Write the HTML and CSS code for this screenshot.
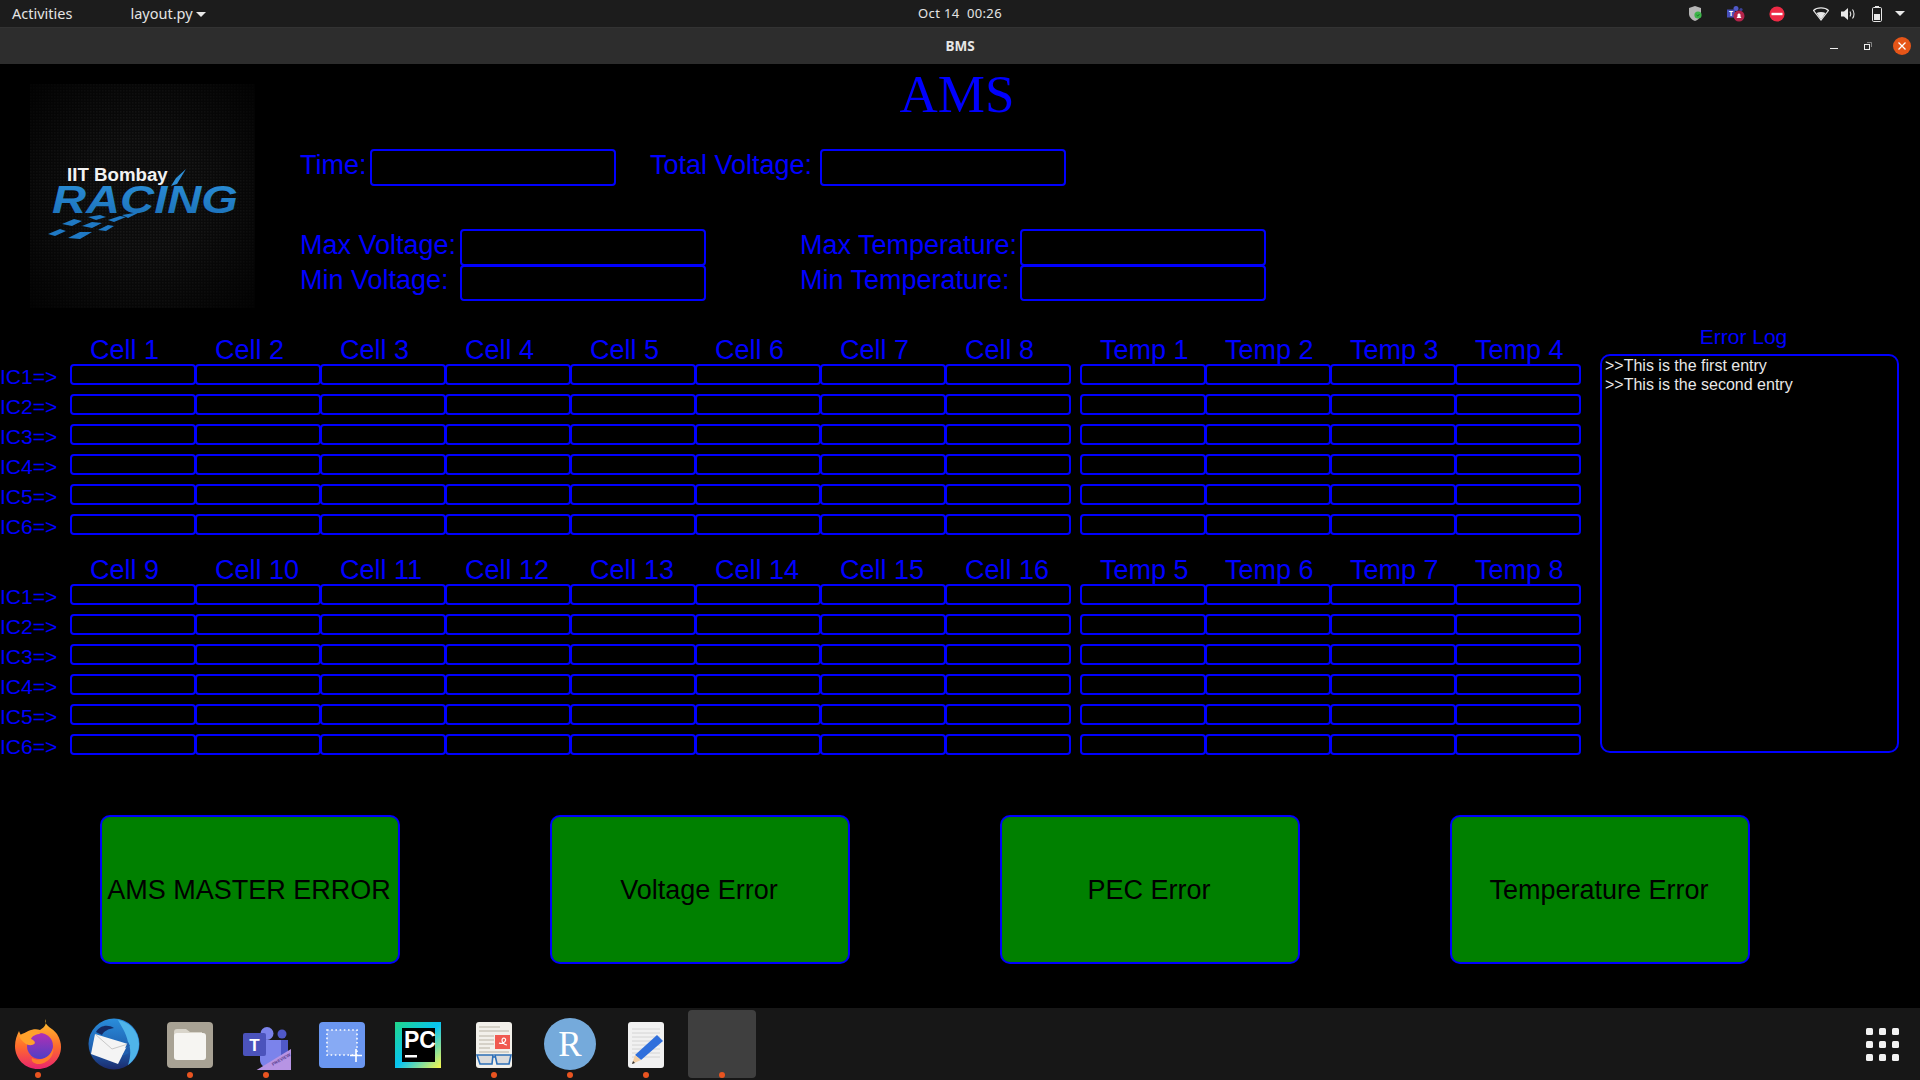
FILE: index.html
```html
<!DOCTYPE html>
<html lang="en">
<head>
  <meta charset="UTF-8" />
  <title>BMS</title>
  <link rel="stylesheet" href="styles.css">
</head>
<body>

  <!-- Desktop top bar -->
  <div class="topbar">
    <div class="topbar-left">
      <span class="activities">Activities</span>
      <span class="app-menu">layout.py <i class="caret"></i></span>
    </div>
    <div class="clock">Oct 14&nbsp; 00:26</div>
    <div class="tray">
      <svg class="tray-shield" viewBox="0 0 16 16"><path d="M7 0 L13 2 V8 C13 11 10 14 7 15 C4 14 1 11 1 8 V2 Z" fill="#b5b5b5"/><circle cx="10" cy="9" r="3.6" fill="#3db54a"/><path d="M8.6 9 L9.7 10 L11.4 8.2" stroke="#1c6b28" fill="none"/></svg>
      <svg class="tray-teams" viewBox="0 0 18 16"><circle cx="9" cy="2.5" r="2.5" fill="#5059c9"/><circle cx="14" cy="3.5" r="1.6" fill="#3c4296"/><rect x="0" y="3.5" width="8" height="8" fill="#464eb8"/><text x="2" y="10" class="tray-t">T</text><circle cx="12" cy="10" r="5.5" fill="#b3244a"/><path d="M9.5 12 H14.5 L13.5 10.5 V9 C13.5 7 10.5 7 10.5 9 V10.5 Z" fill="#fff"/></svg>
      <svg class="tray-stop" viewBox="0 0 16 16"><circle cx="8" cy="8" r="7.6" fill="#ed2a45"/><rect x="2.5" y="6.8" width="11" height="2.4" fill="#fff"/></svg>
      <svg class="tray-wifi" viewBox="0 0 16 14"><path d="M0.5 3.5 C4 0 12 0 15.5 3.5 L8 13 Z" fill="none" stroke="#e8e8e8" stroke-width="1.2"/><path d="M3.5 6 C6 4.5 10 4.5 12.5 6 L8 12.5 Z" fill="#e8e8e8"/></svg>
      <svg class="tray-vol" viewBox="0 0 15 14"><path d="M0 4.5 H3 L7 1 V13 L3 9.5 H0 Z" fill="#e8e8e8"/><path d="M9 4.5 C10 6 10 8 9 9.5 M11.5 2.5 C13.5 5 13.5 9 11.5 11.5" fill="none" stroke="#e8e8e8" stroke-width="1.1"/></svg>
      <svg class="tray-bat" viewBox="0 0 10 16"><rect x="0.5" y="1.5" width="9" height="14" rx="1.2" fill="none" stroke="#e8e8e8"/><rect x="3" y="0" width="4" height="1.5" fill="#e8e8e8"/><rect x="2" y="8" width="6" height="6" fill="#e8e8e8"/></svg>
      <i class="caret tray-caret"></i>
    </div>
  </div>

  <!-- Window title bar -->
  <div class="titlebar">
    <span class="title">BMS</span>
    <div class="win-buttons">
      <span class="win-min"></span>
      <svg class="win-restore" viewBox="0 0 8 8"><rect x="0.5" y="2.5" width="5" height="5" fill="none" stroke="#eee"/><path d="M3 0.5 H7.5 V5" fill="none" stroke="#999" stroke-width="0.8"/></svg>
      <svg class="win-close" viewBox="0 0 18 18"><circle cx="9" cy="9" r="9" fill="#e65518"/><path d="M5.5 5.5 L12.5 12.5 M12.5 5.5 L5.5 12.5" stroke="#fff" stroke-width="1.3"/></svg>
    </div>
  </div>

  <div class="app">

    <div class="head">
      <!-- Team logo -->
      <svg class="logo" viewBox="0 0 225 224">
        <defs>
          <pattern id="carbon" width="3" height="3" patternUnits="userSpaceOnUse">
            <rect width="3" height="3" fill="#0b0b0b"/>
            <rect width="1.5" height="1.5" fill="#181818"/>
          </pattern>
          <radialGradient id="fade" r="0.72">
            <stop offset="0.35" stop-color="#000" stop-opacity="0"/>
            <stop offset="1" stop-color="#000" stop-opacity="0.85"/>
          </radialGradient>
          <linearGradient id="racing" x1="0" y1="0" x2="0" y2="1">
            <stop offset="0" stop-color="#2c90d8"/>
            <stop offset="1" stop-color="#1a6fb8"/>
          </linearGradient>
        </defs>
        <rect width="225" height="224" fill="url(#carbon)"/>
        <rect width="225" height="224" fill="url(#fade)"/>
        <text x="37" y="97" class="logo-top">IIT Bombay</text>
        <text x="22" y="129" textLength="186" lengthAdjust="spacingAndGlyphs" class="logo-racing">RACING</text>
        <path d="M156 85 L146 94 L141 102 L147 100 Z" fill="#2f8fd6"/>
        <g fill="#1f79c4">
          <path d="M18 150 L30 145 L36 147 L25 152 Z"/>
          <path d="M38 154 L50 148 L62 148 L50 155 Z"/>
          <path d="M32 140 L44 135 L52 137 L42 142 Z"/>
          <path d="M52 142 L62 138 L72 139 L62 144 Z"/>
          <path d="M68 146 L78 141 L84 142 L76 147 Z"/>
          <path d="M58 133 L70 131 L76 133 L66 136 Z"/>
          <path d="M78 136 L90 132 L96 133 L84 138 Z"/>
          <path d="M92 131 L110 128 L98 134 Z"/>
        </g>
      </svg>

      <div class="form">
        <h1 class="heading">AMS</h1>
        <div class="form-row row-time">
          <label class="lbl lbl-time">Time:</label><div class="field"></div>
          <label class="lbl lbl-total">Total Voltage:</label><div class="field"></div>
        </div>
        <div class="form-row row-max">
          <label class="lbl lbl-volt">Max Voltage:</label><div class="field"></div>
          <label class="lbl lbl-temp">Max Temperature:</label><div class="field"></div>
        </div>
        <div class="form-row row-min">
          <label class="lbl lbl-volt">Min Voltage:</label><div class="field"></div>
          <label class="lbl lbl-temp">Min Temperature:</label><div class="field"></div>
        </div>
      </div>
    </div>

    <div class="body">
      <div class="tables">

        <div class="table">
          <div class="row head-row"><span></span><span>Cell 1</span><span>Cell 2</span><span>Cell 3</span><span>Cell 4</span><span>Cell 5</span><span>Cell 6</span><span>Cell 7</span><span>Cell 8</span><span class="t1">Temp 1</span><span>Temp 2</span><span>Temp 3</span><span>Temp 4</span></div>
          <div class="row"><span class="ic">IC1=&gt;</span><div class="cell"></div><div class="cell"></div><div class="cell"></div><div class="cell"></div><div class="cell"></div><div class="cell"></div><div class="cell"></div><div class="cell"></div><div class="cell t1"></div><div class="cell"></div><div class="cell"></div><div class="cell"></div></div>
          <div class="row"><span class="ic">IC2=&gt;</span><div class="cell"></div><div class="cell"></div><div class="cell"></div><div class="cell"></div><div class="cell"></div><div class="cell"></div><div class="cell"></div><div class="cell"></div><div class="cell t1"></div><div class="cell"></div><div class="cell"></div><div class="cell"></div></div>
          <div class="row"><span class="ic">IC3=&gt;</span><div class="cell"></div><div class="cell"></div><div class="cell"></div><div class="cell"></div><div class="cell"></div><div class="cell"></div><div class="cell"></div><div class="cell"></div><div class="cell t1"></div><div class="cell"></div><div class="cell"></div><div class="cell"></div></div>
          <div class="row"><span class="ic">IC4=&gt;</span><div class="cell"></div><div class="cell"></div><div class="cell"></div><div class="cell"></div><div class="cell"></div><div class="cell"></div><div class="cell"></div><div class="cell"></div><div class="cell t1"></div><div class="cell"></div><div class="cell"></div><div class="cell"></div></div>
          <div class="row"><span class="ic">IC5=&gt;</span><div class="cell"></div><div class="cell"></div><div class="cell"></div><div class="cell"></div><div class="cell"></div><div class="cell"></div><div class="cell"></div><div class="cell"></div><div class="cell t1"></div><div class="cell"></div><div class="cell"></div><div class="cell"></div></div>
          <div class="row"><span class="ic">IC6=&gt;</span><div class="cell"></div><div class="cell"></div><div class="cell"></div><div class="cell"></div><div class="cell"></div><div class="cell"></div><div class="cell"></div><div class="cell"></div><div class="cell t1"></div><div class="cell"></div><div class="cell"></div><div class="cell"></div></div>
        </div>

        <div class="table table-two">
          <div class="row head-row"><span></span><span>Cell 9</span><span>Cell 10</span><span>Cell 11</span><span>Cell 12</span><span>Cell 13</span><span>Cell 14</span><span>Cell 15</span><span>Cell 16</span><span class="t1">Temp 5</span><span>Temp 6</span><span>Temp 7</span><span>Temp 8</span></div>
          <div class="row"><span class="ic">IC1=&gt;</span><div class="cell"></div><div class="cell"></div><div class="cell"></div><div class="cell"></div><div class="cell"></div><div class="cell"></div><div class="cell"></div><div class="cell"></div><div class="cell t1"></div><div class="cell"></div><div class="cell"></div><div class="cell"></div></div>
          <div class="row"><span class="ic">IC2=&gt;</span><div class="cell"></div><div class="cell"></div><div class="cell"></div><div class="cell"></div><div class="cell"></div><div class="cell"></div><div class="cell"></div><div class="cell"></div><div class="cell t1"></div><div class="cell"></div><div class="cell"></div><div class="cell"></div></div>
          <div class="row"><span class="ic">IC3=&gt;</span><div class="cell"></div><div class="cell"></div><div class="cell"></div><div class="cell"></div><div class="cell"></div><div class="cell"></div><div class="cell"></div><div class="cell"></div><div class="cell t1"></div><div class="cell"></div><div class="cell"></div><div class="cell"></div></div>
          <div class="row"><span class="ic">IC4=&gt;</span><div class="cell"></div><div class="cell"></div><div class="cell"></div><div class="cell"></div><div class="cell"></div><div class="cell"></div><div class="cell"></div><div class="cell"></div><div class="cell t1"></div><div class="cell"></div><div class="cell"></div><div class="cell"></div></div>
          <div class="row"><span class="ic">IC5=&gt;</span><div class="cell"></div><div class="cell"></div><div class="cell"></div><div class="cell"></div><div class="cell"></div><div class="cell"></div><div class="cell"></div><div class="cell"></div><div class="cell t1"></div><div class="cell"></div><div class="cell"></div><div class="cell"></div></div>
          <div class="row"><span class="ic">IC6=&gt;</span><div class="cell"></div><div class="cell"></div><div class="cell"></div><div class="cell"></div><div class="cell"></div><div class="cell"></div><div class="cell"></div><div class="cell"></div><div class="cell t1"></div><div class="cell"></div><div class="cell"></div><div class="cell"></div></div>
        </div>

      </div>

      <div class="error-log">
        <div class="error-title">Error Log</div>
        <div class="error-box">
          <p>&gt;&gt;This is the first entry</p>
          <p>&gt;&gt;This is the second entry</p>
        </div>
      </div>
    </div>

    <div class="alerts">
      <div class="alert">AMS MASTER ERROR</div>
      <div class="alert">Voltage Error</div>
      <div class="alert">PEC Error</div>
      <div class="alert">Temperature Error</div>
    </div>

  </div>

  <!-- Dock -->
  <div class="dock">
    <div class="dock-item running">
      <svg class="dock-icon" viewBox="0 0 52 52">
        <defs>
          <linearGradient id="fx" x1="0" y1="0" x2="0" y2="1"><stop offset="0" stop-color="#ffc62e"/><stop offset="0.55" stop-color="#ff6b2c"/><stop offset="1" stop-color="#e9246f"/></linearGradient>
          <linearGradient id="fxp" x1="0" y1="0" x2="0" y2="1"><stop offset="0" stop-color="#b22fb5"/><stop offset="1" stop-color="#4f3fc4"/></linearGradient>
        </defs>
        <path d="M33 1 C32 8 41 10 45 16 C48 21 49 25 49 29 C49 42 38 51 26 51 C13 51 3 41 3 28 C3 22 5 17 7 13 C8 16 9 17 10 18 C14 13 22 10 28 12 C33 9 35 6 33 1 Z" fill="url(#fx)"/>
        <circle cx="28" cy="28" r="13" fill="url(#fxp)"/>
        <path d="M7 18 C13 13 23 12 29 16 C24 16 20 18 19 21 C24 23 24 26 20 27 C15 28 10 24 7 18 Z" fill="#ffa12b"/>
        <path d="M20 40 C28 44 38 40 41 30 C43 38 34 47 25 46 C21 45 19 43 20 40 Z" fill="#ff7a2c"/>
      </svg>
    </div>
    <div class="dock-item">
      <svg class="dock-icon" viewBox="0 0 52 52">
        <defs>
          <linearGradient id="tb" x1="0" y1="0" x2="0" y2="1"><stop offset="0" stop-color="#2a8edb"/><stop offset="0.6" stop-color="#1f5fb0"/><stop offset="1" stop-color="#1b2a6b"/></linearGradient>
        </defs>
        <circle cx="26" cy="26" r="25.5" fill="url(#tb)"/>
        <path d="M30 2 C42 4 51 14 51 26 C51 34 47 42 40 47 C43 38 43 30 40 24 C38 14 33 8 30 2 Z" fill="#4fb4ea"/>
        <path d="M8 14 C12 7 20 6 26 10 C20 11 16 13 14 17 Z" fill="#152a63"/>
        <path d="M7 16 L40 26 L30 46 L3 36 Z" fill="#f4f4f4"/>
        <path d="M7 16 L24 31 L40 26" fill="none" stroke="#bdbdbd" stroke-width="0.8"/>
        <path d="M40 24 L37 30 L42 28 Z M38 32 L34 38 L41 35 Z" fill="#1f5fb0"/>
      </svg>
    </div>
    <div class="dock-item running">
      <svg class="dock-icon" viewBox="0 0 52 52">
        <rect x="3" y="4" width="46" height="46" rx="4" fill="#a8a294"/>
        <path d="M10 14 C10 12 11 11 13 11 H22 L26 14 H38 V20 H10 Z" fill="#d9d5cb"/>
        <rect x="10" y="15" width="32" height="27" rx="3" fill="#f6f5f2"/>
      </svg>
    </div>
    <div class="dock-item running">
      <svg class="dock-icon" viewBox="0 0 52 52">
        <circle cx="27" cy="15.5" r="6.5" fill="#7b83eb"/>
        <circle cx="42" cy="16" r="4.5" fill="#5059c9"/>
        <path d="M35 22 H48 V42 H35 Z" fill="#5059c9"/>
        <path d="M20 22 H41 V42 C41 48 36 51 31 51 C25 51 20 47 20 42 Z" fill="#7b83eb"/>
        <rect x="3" y="15" width="23" height="23" rx="2" fill="#4b53bc"/>
        <text x="14.5" y="33" text-anchor="middle" class="teams-t">T</text>
        <path d="M51 31 V53 H15 Z" fill="#b794e4"/>
        <text x="33" y="48" class="teams-preview" transform="rotate(-30 33 48)">PREVIEW</text>
      </svg>
    </div>
    <div class="dock-item">
      <svg class="dock-icon" viewBox="0 0 52 52">
        <rect x="3" y="4" width="46" height="46" rx="4" fill="#6a96f0"/>
        <rect x="11" y="12" width="30" height="25" fill="#87aaf4" stroke="#fff" stroke-width="1.6" stroke-dasharray="1.6 2.6"/>
        <path d="M40 31 V44 M34 37.5 H46" stroke="#fff" stroke-width="1.6"/>
      </svg>
    </div>
    <div class="dock-item">
      <svg class="dock-icon" viewBox="0 0 52 52">
        <defs>
          <linearGradient id="pc" x1="0" y1="0" x2="1" y2="1"><stop offset="0" stop-color="#21d789"/><stop offset="0.5" stop-color="#07c3f2"/><stop offset="1" stop-color="#fcf84a"/></linearGradient>
        </defs>
        <rect x="3" y="4" width="46" height="46" fill="url(#pc)"/>
        <rect x="10" y="10" width="33" height="34" fill="#000"/>
        <text x="12" y="30" class="pc-text">PC</text>
        <rect x="13" y="37" width="12" height="2.5" fill="#fff"/>
      </svg>
    </div>
    <div class="dock-item running">
      <svg class="dock-icon" viewBox="0 0 52 52">
        <rect x="8" y="4" width="36" height="46" rx="3" fill="#f2f0ea"/>
        <path d="M11 9 H32 M11 13 H41 M11 18 H26 M11 22 H26 M11 26 H26 M11 30 H22 M11 34 H41" stroke="#b8b2a4" stroke-width="1.2"/>
        <rect x="27" y="17" width="15" height="14" fill="#f05a50"/>
        <path d="M31 25 C36 27 40 21 36 20 C33 20 33 26 39 27" fill="none" stroke="#fff" stroke-width="1.2"/>
        <path d="M9 37 H25 L24 46 H12 Z M27 37 H43 L41 46 H29 Z M25 39 H27" fill="#dcdcdc" stroke="#2d6fb7" stroke-width="1.6"/>
      </svg>
    </div>
    <div class="dock-item running">
      <svg class="dock-icon" viewBox="0 0 52 52">
        <circle cx="26" cy="26" r="26" fill="#75aadb"/>
        <text x="26" y="38" text-anchor="middle" class="r-text">R</text>
      </svg>
    </div>
    <div class="dock-item running">
      <svg class="dock-icon" viewBox="0 0 52 52">
        <rect x="8" y="4" width="36" height="46" rx="3" fill="#f1f1f1"/>
        <path d="M12 11 H40 M12 15 H40 M12 19 H40 M12 23 H40 M12 27 H40 M12 31 H40 M12 35 H40 M12 39 H40" stroke="#d4d4d4"/>
        <path d="M37 17 L43 23 L21 42 L15 37 Z" fill="#2f6fdc"/>
        <path d="M15 37 L21 42 L12 46 Z" fill="#f2cfa6"/>
        <path d="M12 46 L13 43 L15 45 Z" fill="#333"/>
      </svg>
    </div>
    <div class="dock-item running active"><div class="tile"></div></div>
    <div class="app-grid">
      <i></i><i></i><i></i><i></i><i></i><i></i><i></i><i></i><i></i>
    </div>
  </div>

</body>
</html>
```
FILE: styles.css
```css
* {
  box-sizing: border-box;
}

body {
  font-family: "Liberation Sans", Arial, sans-serif;
  background: #000;
  margin: 0;
  height: 100vh;
  display: flex;
  flex-direction: column;
  overflow: hidden;
}

/* top bar */
.topbar {
  height: 27px;
  background: #1c1c1c;
  display: grid;
  grid-template-columns: 1fr auto 1fr;
  align-items: center;
  padding-bottom: 2px;
  color: #e4e4e4;
  font-family: "Noto Sans", sans-serif;
  font-size: 14.5px;
}

.topbar-left {
  display: flex;
  align-items: center;
}

.activities {
  margin-left: 12px;
}

.app-menu {
  margin-left: 58px;
}

.caret {
  display: inline-block;
  width: 0;
  height: 0;
  border-left: 5px solid transparent;
  border-right: 5px solid transparent;
  border-top: 5px solid #e8e8e8;
  vertical-align: middle;
}

.clock {
  font-size: 13px;
  letter-spacing: 0.35px;
}

.tray {
  display: flex;
  align-items: center;
  justify-content: flex-end;
  padding-right: 15px;
  margin-top: 2px;
}

.tray-shield { width: 16px; height: 16px; }
.tray-teams { width: 18px; height: 16px; margin-left: 23px; }
.tray-stop { width: 16px; height: 16px; margin-left: 24px; }
.tray-wifi { width: 16px; height: 14px; margin-left: 28px; }
.tray-vol { width: 15px; height: 14px; margin-left: 12px; }
.tray-bat { width: 10px; height: 16px; margin-left: 16px; }
.tray-caret { margin-left: 13px; }

.tray-t {
  font-size: 7px;
  font-weight: bold;
  fill: #fff;
}

/* title bar */
.titlebar {
  height: 37px;
  background: #2d2d2d;
  border-top: 1px solid #333;
  position: relative;
  display: flex;
  align-items: center;
  justify-content: center;
  padding-bottom: 1px;
}

.title {
  color: #e6e6e6;
  font-family: "Noto Sans", sans-serif;
  font-size: 13.5px;
  font-weight: bold;
}

.win-buttons {
  position: absolute;
  right: 9px;
  top: 0;
  bottom: 0;
  display: flex;
  align-items: center;
}

.win-min {
  width: 8px;
  height: 1px;
  background: #eee;
  margin-top: 4px;
}

.win-restore {
  width: 8px;
  height: 8px;
  margin-left: 26px;
}

.win-close {
  width: 18px;
  height: 18px;
  margin-left: 21px;
}

/* app window */
.app {
  flex: 1;
  background: #000;
  color: #0000ff;
}

.head {
  height: 264px;
  display: flex;
}

.logo {
  width: 225px;
  height: 224px;
  margin: 20px 0 0 30px;
  flex: none;
}

.logo-top {
  font-family: "Liberation Sans", sans-serif;
  font-size: 18.7px;
  font-weight: bold;
  fill: #f2f2f2;
}

.logo-racing {
  font-family: "Liberation Sans", sans-serif;
  font-size: 39px;
  font-weight: bold;
  font-style: italic;
  fill: url(#racing);
}

.form {
  margin-left: 45px;
  width: 1314px;
}

.heading {
  font-family: "Liberation Serif", serif;
  font-size: 53px;
  font-weight: normal;
  line-height: 61px;
  text-align: center;
  margin: 0;
}

.form-row {
  display: flex;
  height: 36px;
}

.row-time {
  margin-top: 24px;
  height: 37px;
}

.row-max {
  margin-top: 43px;
}

.lbl {
  font-size: 27px;
  line-height: 32px;
}

.row-min .lbl {
  line-height: 31px;
}

.lbl-time { width: 70px; }
.lbl-total { width: 170px; margin-left: 34px; }
.lbl-volt { width: 160px; }
.lbl-temp { width: 220px; margin-left: 94px; }

.field {
  width: 246px;
  height: 37px;
  border: 2px solid #0000ff;
  border-radius: 4px;
}

.row-min .field {
  height: 36px;
}

/* tables */
.body {
  display: flex;
  align-items: flex-start;
}

.tables {
  width: 1600px;
  padding-top: 10px;
}

.table-two {
  margin-top: 23px;
}

.row {
  display: grid;
  grid-template-columns: 70px repeat(8, 125px) 10px repeat(4, 125px);
  height: 21px;
  margin-bottom: 9px;
}

.t1 {
  grid-column: 11;
}

.head-row {
  height: 26px;
  margin-bottom: 0;
  font-size: 27px;
  line-height: 24px;
}

.head-row span {
  padding-left: 20px;
  white-space: nowrap;
}

.ic {
  font-size: 21px;
  line-height: 26px;
  white-space: nowrap;
}

.cell {
  height: 21px;
  margin-right: -1px;
  border: 2px solid #0000ff;
  border-radius: 4px;
}

.error-log {
  width: 299px;
}

.error-title {
  font-size: 21px;
  line-height: 18px;
  margin-bottom: 8px;
  text-align: center;
  padding-right: 12px;
}

.error-box {
  height: 399px;
  border: 2px solid #0000ff;
  border-radius: 10px;
  padding: 0 3px;
  color: #e8e8e8;
  font-size: 16px;
  line-height: 19px;
}

.error-box p {
  margin: 0;
}

/* alert buttons */
.alerts {
  display: flex;
  gap: 150px;
  margin: 51px 0 0 100px;
}

.alert {
  width: 300px;
  height: 149px;
  padding: 2px 2px 0 0;
  background: #008000;
  border: 2px solid #0000ff;
  border-radius: 10px;
  color: #000;
  font-size: 27px;
  display: flex;
  align-items: center;
  justify-content: center;
  white-space: nowrap;
}

/* dock */
.dock {
  height: 72px;
  background: #171717;
  display: flex;
  align-items: center;
}

.dock-item {
  width: 76px;
  height: 72px;
  display: flex;
  align-items: center;
  justify-content: center;
  position: relative;
}

.running::after {
  content: "";
  position: absolute;
  left: 35px;
  bottom: 2px;
  width: 6px;
  height: 6px;
  border-radius: 50%;
  background: #e95420;
}

.dock-icon {
  width: 52px;
  height: 52px;
}

.tile {
  width: 68px;
  height: 68px;
  background: #3f3f3f;
  border-radius: 4px;
}

.teams-t {
  font-family: "Liberation Sans", sans-serif;
  font-size: 17px;
  font-weight: bold;
  fill: #fff;
}

.teams-preview {
  font-family: "Liberation Sans", sans-serif;
  font-size: 4.5px;
  font-weight: bold;
  fill: #5a3f90;
}

.pc-text {
  font-family: "Liberation Sans", sans-serif;
  font-size: 23px;
  font-weight: bold;
  fill: #fff;
}

.r-text {
  font-family: "Liberation Serif", serif;
  font-size: 35px;
  fill: #fff;
}

.app-grid {
  margin-left: auto;
  margin-right: 21px;
  display: grid;
  grid-template-columns: repeat(3, 7px);
  gap: 6px;
}

.app-grid i {
  height: 7px;
  background: #f2f2f2;
  border-radius: 1.5px;
}
```
